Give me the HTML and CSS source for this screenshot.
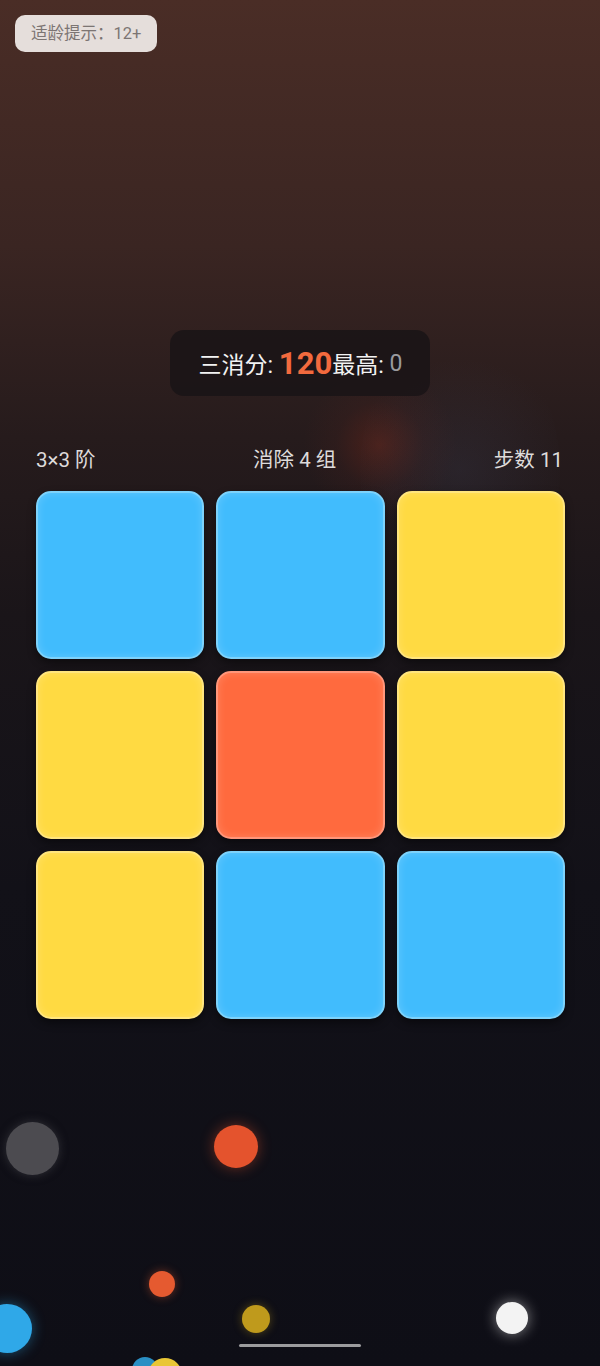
FILE: index.html
```html
<!DOCTYPE html>
<html lang="zh-CN">
<head>
  <meta charset="UTF-8">
  <meta name="viewport" content="width=device-width, initial-scale=1.0">
  <title>三消</title>
  <link rel="stylesheet" href="styles.css">
</head>
<body>
  <div class="screen">
    <!-- background glows and bubbles -->
    <div class="glow glow-red"></div>
    <div class="glow glow-blue"></div>
    <div class="bubble b-gray"></div>
    <div class="bubble b-orange"></div>
    <div class="bubble b-orange-sm"></div>
    <div class="bubble b-blue"></div>
    <div class="bubble b-yellow"></div>
    <div class="bubble b-white"></div>
    <div class="bubble b-blue-low"></div>
    <div class="bubble b-yellow-low"></div>

    <div class="age-tip">适龄提示：12+</div>

    <div class="score-pill">
      <span class="label">三消分:&nbsp;</span><span class="score">120</span><span class="label">最高:&nbsp;</span><span class="best">0</span>
    </div>

    <div class="info-row">
      <span>3×3 阶</span>
      <span>消除 4 组</span>
      <span>步数 11</span>
    </div>

    <div class="board">
      <div class="tile blue"></div>
      <div class="tile blue"></div>
      <div class="tile yellow"></div>
      <div class="tile yellow"></div>
      <div class="tile orange"></div>
      <div class="tile yellow"></div>
      <div class="tile yellow"></div>
      <div class="tile blue"></div>
      <div class="tile blue"></div>
    </div>

    <div class="home-bar"></div>
  </div>
</body>
</html>
```

FILE: styles.css
```css
body {
  margin: 0;
  font-family: Roboto, "Noto Sans CJK SC", sans-serif;
  background: #0e0e15;
}

.screen {
  position: relative;
  width: 600px;
  height: 1366px;
  overflow: hidden;
  padding-top: 15px;
  box-sizing: border-box;
  background: linear-gradient(180deg, #4a2d26 0%, #3a2522 18%, #261b1c 32%, #1a1519 45%, #121118 65%, #0e0e16 100%);
}

.glow {
  position: absolute;
  border-radius: 50%;
  pointer-events: none;
}

.glow-red {
  left: 300px;
  top: 370px;
  width: 160px;
  height: 150px;
  background: radial-gradient(circle, rgba(120, 40, 25, 0.45) 0%, rgba(90, 35, 30, 0.15) 40%, rgba(0, 0, 0, 0) 70%);
}

.glow-blue {
  left: 360px;
  top: 330px;
  width: 200px;
  height: 280px;
  background: radial-gradient(circle, rgba(70, 80, 110, 0.18) 0%, rgba(0, 0, 0, 0) 65%);
}

.bubble {
  position: absolute;
  border-radius: 50%;
}

.b-gray {
  left: 6px;
  top: 1122px;
  width: 53px;
  height: 53px;
  background: #4c4b50;
  box-shadow: 0 0 10px rgba(80, 80, 85, 0.5);
}

.b-orange {
  left: 214px;
  top: 1125px;
  width: 44px;
  height: 43px;
  background: #e4532d;
  box-shadow: 0 0 14px rgba(228, 83, 45, 0.45);
}

.b-orange-sm {
  left: 149px;
  top: 1271px;
  width: 26px;
  height: 26px;
  background: #e55a30;
  box-shadow: 0 0 10px rgba(229, 90, 48, 0.45);
}

.b-blue {
  left: -18px;
  top: 1304px;
  width: 50px;
  height: 49px;
  background: #2fa8e8;
  box-shadow: 0 0 14px rgba(47, 168, 232, 0.45);
}

.b-yellow {
  left: 242px;
  top: 1305px;
  width: 28px;
  height: 28px;
  background: #bf9a1c;
  box-shadow: 0 0 10px rgba(191, 154, 28, 0.4);
}

.b-white {
  left: 496px;
  top: 1302px;
  width: 32px;
  height: 32px;
  background: #f3f3f3;
  box-shadow: 0 0 14px rgba(255, 255, 255, 0.5);
}

.b-blue-low {
  left: 132px;
  top: 1357px;
  width: 26px;
  height: 26px;
  background: #2a8fc4;
}

.b-yellow-low {
  left: 148px;
  top: 1358px;
  width: 34px;
  height: 34px;
  background: #e9c635;
}

.age-tip {
  position: relative;
  margin-left: 15px;
  width: fit-content;
  height: 37px;
  line-height: 37px;
  padding: 0 16px 0 16px;
  border-radius: 10px;
  background: #e5dedb;
  color: #7c7573;
  font-size: 16.5px;
}

.score-pill {
  position: relative;
  width: fit-content;
  margin: 278px auto 0;
  height: 66px;
  padding: 0 28px 0 29px;
  display: flex;
  align-items: center;
  border-radius: 14px;
  background: rgba(24, 20, 22, 0.82);
  color: #f2f2f2;
  font-size: 23px;
}

.score-pill .score {
  color: #f26a3e;
  font-weight: 700;
  font-size: 31px;
}

.score-pill .best {
  color: #9a9a9e;
}

.info-row {
  position: relative;
  display: flex;
  justify-content: space-between;
  padding: 0 37px 0 36px;
  margin-top: 51px;
  line-height: 26px;
  font-size: 20.5px;
  color: #dedbdb;
}

.board {
  position: relative;
  display: grid;
  grid-template-columns: repeat(3, 1fr);
  gap: 12px;
  padding: 0 35px 0 36px;
  margin-top: 18px;
}

.tile {
  height: 168px;
  border-radius: 15px;
  box-sizing: border-box;
  border: 2px solid;
  box-shadow: 0 4px 8px rgba(0, 0, 0, 0.45), inset 0 0 8px rgba(255, 255, 255, 0.18);
}

.blue {
  background: #41bcfd;
  border-color: #7dd2fb;
}

.yellow {
  background: #ffda42;
  border-color: #ffe57e;
}

.orange {
  background: #ff6a3e;
  border-color: #ff967a;
}

.home-bar {
  position: absolute;
  left: 239px;
  top: 1344px;
  width: 122px;
  height: 3px;
  border-radius: 2px;
  background: #9c9c9e;
}
```
